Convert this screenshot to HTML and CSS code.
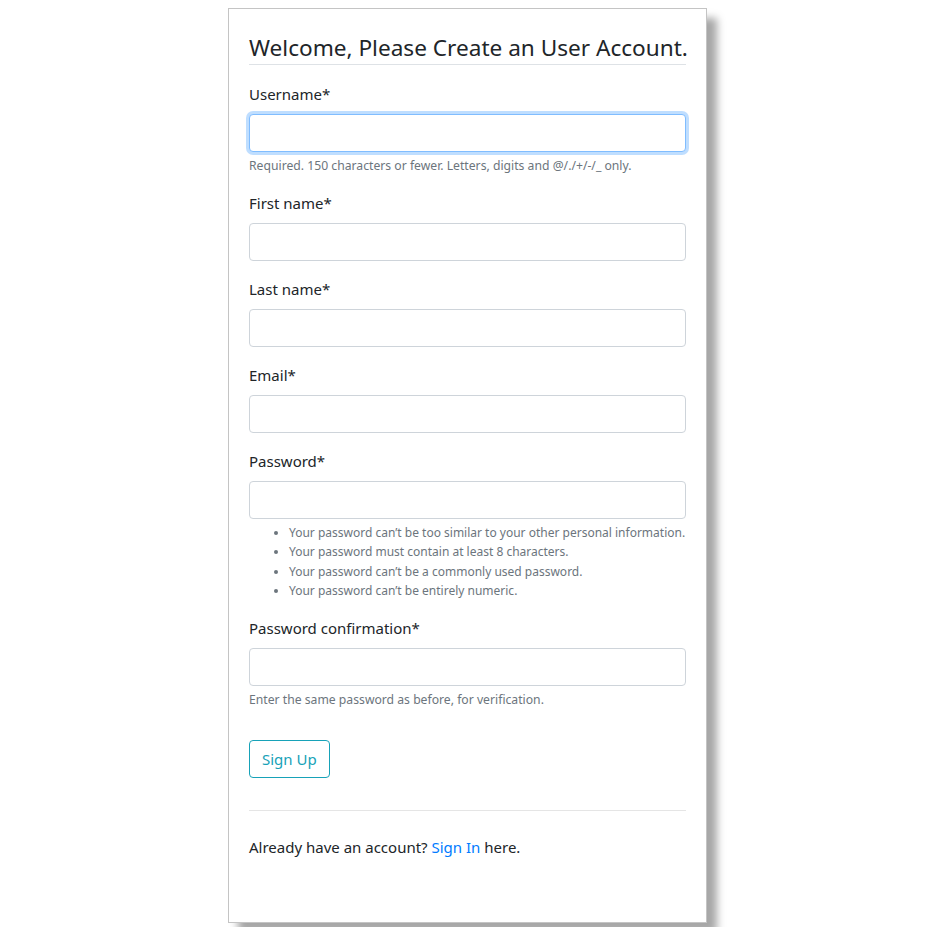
FILE: index.html
```html
<!DOCTYPE html>
<html lang="en">
<head>
<meta charset="utf-8">
<title>Sign Up</title>
<link rel="stylesheet" href="styles.css">
</head>
<body>
<div class="page">
  <div class="card">
    <h4 class="title">Welcome, Please Create an User Account.</h4>
    <form class="form">
      <div class="form-group">
        <label class="label" for="id_username">Username*</label>
        <input class="form-control focused" type="text" id="id_username">
        <small class="form-text">Required. 150 characters or fewer. Letters, digits and @/./+/-/_ only.</small>
      </div>
      <div class="form-group">
        <label class="label" for="id_first">First name*</label>
        <input class="form-control" type="text" id="id_first">
      </div>
      <div class="form-group">
        <label class="label" for="id_last">Last name*</label>
        <input class="form-control" type="text" id="id_last">
      </div>
      <div class="form-group">
        <label class="label" for="id_email">Email*</label>
        <input class="form-control" type="email" id="id_email">
      </div>
      <div class="form-group">
        <label class="label" for="id_password1">Password*</label>
        <input class="form-control" type="password" id="id_password1">
        <small class="form-text">
          <ul class="rules">
            <li>Your password can’t be too similar to your other personal information.</li>
            <li>Your password must contain at least 8 characters.</li>
            <li>Your password can’t be a commonly used password.</li>
            <li>Your password can’t be entirely numeric.</li>
          </ul>
        </small>
      </div>
      <div class="form-group">
        <label class="label" for="id_password2">Password confirmation*</label>
        <input class="form-control" type="password" id="id_password2">
        <small class="form-text">Enter the same password as before, for verification.</small>
      </div>
      <div class="actions">
        <button class="btn" type="button">Sign Up</button>
      </div>
    </form>
    <hr class="divider">
    <p class="footer-text">Already have an account? <a class="link" href="#">Sign In</a> here.</p>
  </div>
</div>
</body>
</html>
```
FILE: styles.css
```css
body {
  margin: 8px;
  font-family: "Noto Sans", "Open Sans", sans-serif;
  font-size: 15px;
  line-height: 24px;
  color: #212529;
  background: #fff;
}
.page {
  padding-left: 220px;
  padding-bottom: 186px;
}
.card {
  box-sizing: border-box;
  width: 479px;
  height: 915px;
  border: 1px solid #c4c4c4;
  padding: 20px;
  background: #fff;
  box-shadow: 10px 10px 8px rgba(0, 0, 0, 0.35);
}
.title {
  margin: 0 0 17px;
  padding: 3px 0 0;
  font-size: 22.6px;
  font-weight: 400;
  line-height: 32px;
  white-space: nowrap;
  border-bottom: 1px solid #dee2e6;
}
.form {
  margin: 0;
}
.form-group {
  margin-bottom: 16px;
}
.label {
  display: block;
  margin-bottom: 8px;
}
.form-control {
  display: block;
  box-sizing: border-box;
  width: 100%;
  height: 38px;
  padding: 6px 12px;
  font: inherit;
  border: 1px solid #ced4da;
  border-radius: 4px;
  background: #fff;
  outline: none;
}
.form-control.focused {
  border-color: #80bdff;
  box-shadow: 0 0 0 3px rgba(0, 123, 255, 0.25);
}
.form-text {
  display: block;
  margin-top: 4px;
  font-size: 12.2px;
  line-height: 19.2px;
  color: #6c757d;
}
.rules {
  margin: 0;
  padding-left: 40px;
  font-size: 12px;
}
.actions {
  padding-top: 15px;
}
.btn {
  font: inherit;
  color: #17a2b8;
  background: transparent;
  border: 1px solid #17a2b8;
  border-radius: 4px;
  padding: 6px 12px;
  line-height: 24px;
  cursor: pointer;
}
.divider {
  margin: 32px 0 24px;
  border: 0;
  border-top: 1px solid rgba(0, 0, 0, 0.1);
}
.footer-text {
  margin: 0;
}
.link {
  color: #007bff;
  text-decoration: none;
}
```
